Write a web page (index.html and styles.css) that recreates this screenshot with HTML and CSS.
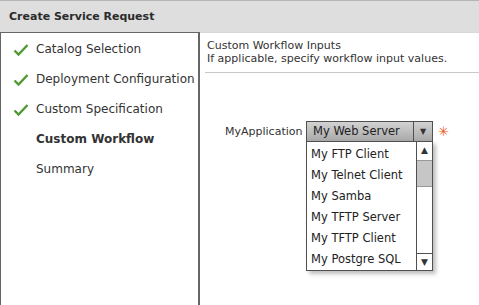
FILE: index.html
```html
<!DOCTYPE html>
<html lang="en">
<head>
    <meta charset="UTF-8">
    <title>Create Service Request</title>
    <link rel="stylesheet" href="styles.css">
</head>
<body>
    <div class="header">Create Service Request</div>
    <div class="wizard">
        <ul class="steps">
            <li class="done"><svg class="tick" viewBox="0 0 16 14"><path d="M1.5 7.5 L5.5 11.5 L14.5 2" /></svg>Catalog Selection</li>
            <li class="done"><svg class="tick" viewBox="0 0 16 14"><path d="M1.5 7.5 L5.5 11.5 L14.5 2" /></svg>Deployment Configuration</li>
            <li class="done"><svg class="tick" viewBox="0 0 16 14"><path d="M1.5 7.5 L5.5 11.5 L14.5 2" /></svg>Custom Specification</li>
            <li class="current">Custom Workflow</li>
            <li>Summary</li>
        </ul>
        <div class="content">
            <div class="intro">
                <div>Custom Workflow Inputs</div>
                <div>If applicable, specify workflow input values.</div>
            </div>
            <div class="field">
                <label>MyApplication</label>
                <div class="select-wrap">
                    <div class="select">
                        <span class="value">My Web Server</span>
                        <span class="arrow">&#9660;</span>
                    </div>
                    <div class="dropdown">
                        <ul class="options">
                            <li>My FTP Client</li>
                            <li>My Telnet Client</li>
                            <li>My Samba</li>
                            <li>My TFTP Server</li>
                            <li>My TFTP Client</li>
                            <li>My Postgre SQL</li>
                        </ul>
                        <div class="scrollbar">
                            <span class="sb-btn">&#9650;</span>
                            <span class="sb-track"><span class="sb-thumb"></span></span>
                            <span class="sb-btn">&#9660;</span>
                        </div>
                    </div>
                </div>
                <span class="required">&#10035;</span>
            </div>
        </div>
    </div>
</body>
</html>
```

FILE: styles.css
```css
body {
    margin: 0;
    font-family: "DejaVu Sans", Verdana, sans-serif;
    color: #333;
    background: #fff;
    height: 305px;
    overflow: hidden;
}
.header {
    height: 31px;
    border-top: 1px solid #b5b5b5;
    background: #dedede;
    font-size: 11px;
    font-weight: bold;
    line-height: 32px;
    padding-left: 9px;
    color: #2b2b2b;
}
.wizard {
    display: flex;
    height: 273px;
}
.steps {
    list-style: none;
    margin: 0;
    padding: 1px 0 0 0;
    width: 197px;
    border: 1px solid #666;
    border-bottom: none;
    border-right-width: 2px;
    font-size: 12px;
}
.steps li {
    height: 30px;
    line-height: 30px;
    padding-left: 35px;
    position: relative;
    color: #333;
}
.steps li.current {
    font-weight: bold;
}
.tick {
    position: absolute;
    left: 12px;
    top: 9px;
    width: 16px;
    height: 14px;
    fill: none;
    stroke: #4f9a32;
    stroke-width: 2.4;
}
.content {
    flex: 1;
    border-top: 1px solid #d8d8d8;
}
.intro {
    margin: 0 0 0 5px;
    padding: 6px 0 7px 2px;
    border-bottom: 1px solid #c8c8c8;
    font-size: 11px;
    line-height: 13px;
    color: #333;
}
.field {
    display: flex;
    align-items: center;
    margin-top: 48px;
    padding-left: 25px;
    font-size: 11px;
}
.field label {
    width: 81px;
}
.select-wrap {
    position: relative;
}
.select {
    display: flex;
    width: 125px;
    height: 19px;
    border: 1px solid #505050;
    background: linear-gradient(#d2d2d2, #a9a9a9);
    font-size: 11.5px;
    line-height: 19px;
}
.select .value {
    flex: 1;
    padding-left: 6px;
    color: #222;
}
.select .arrow {
    width: 18px;
    border-left: 1px solid #505050;
    text-align: center;
    font-size: 8px;
    color: #333;
}
.required {
    margin-left: 5px;
    color: #f05a1a;
    font-size: 13px;
    font-weight: bold;
}
.dropdown {
    position: absolute;
    left: 0;
    top: 20px;
    width: 125px;
    height: 128px;
    display: flex;
    border: 1px solid #505050;
    background: #fff;
    box-shadow: 3px 3px 4px rgba(0, 0, 0, 0.25);
}
.options {
    list-style: none;
    margin: 0;
    padding: 2px 0 0 4px;
    flex: 1;
    font-size: 11.5px;
}
.options li {
    height: 21px;
    line-height: 21px;
    color: #222;
}
.scrollbar {
    width: 15px;
    border-left: 1px solid #505050;
    display: flex;
    flex-direction: column;
    background: #fff;
}
.sb-btn {
    height: 16px;
    font-size: 9px;
    line-height: 16px;
    text-align: center;
    color: #333;
}
.sb-btn:last-child {
    border-top: 1px solid #505050;
}
.sb-track {
    flex: 1;
    position: relative;
}
.sb-thumb {
    position: absolute;
    left: 0;
    right: 0;
    top: 2px;
    height: 25px;
    background: #c6c6c6;
    border-top: 1px solid #999;
    border-bottom: 1px solid #999;
}
```
